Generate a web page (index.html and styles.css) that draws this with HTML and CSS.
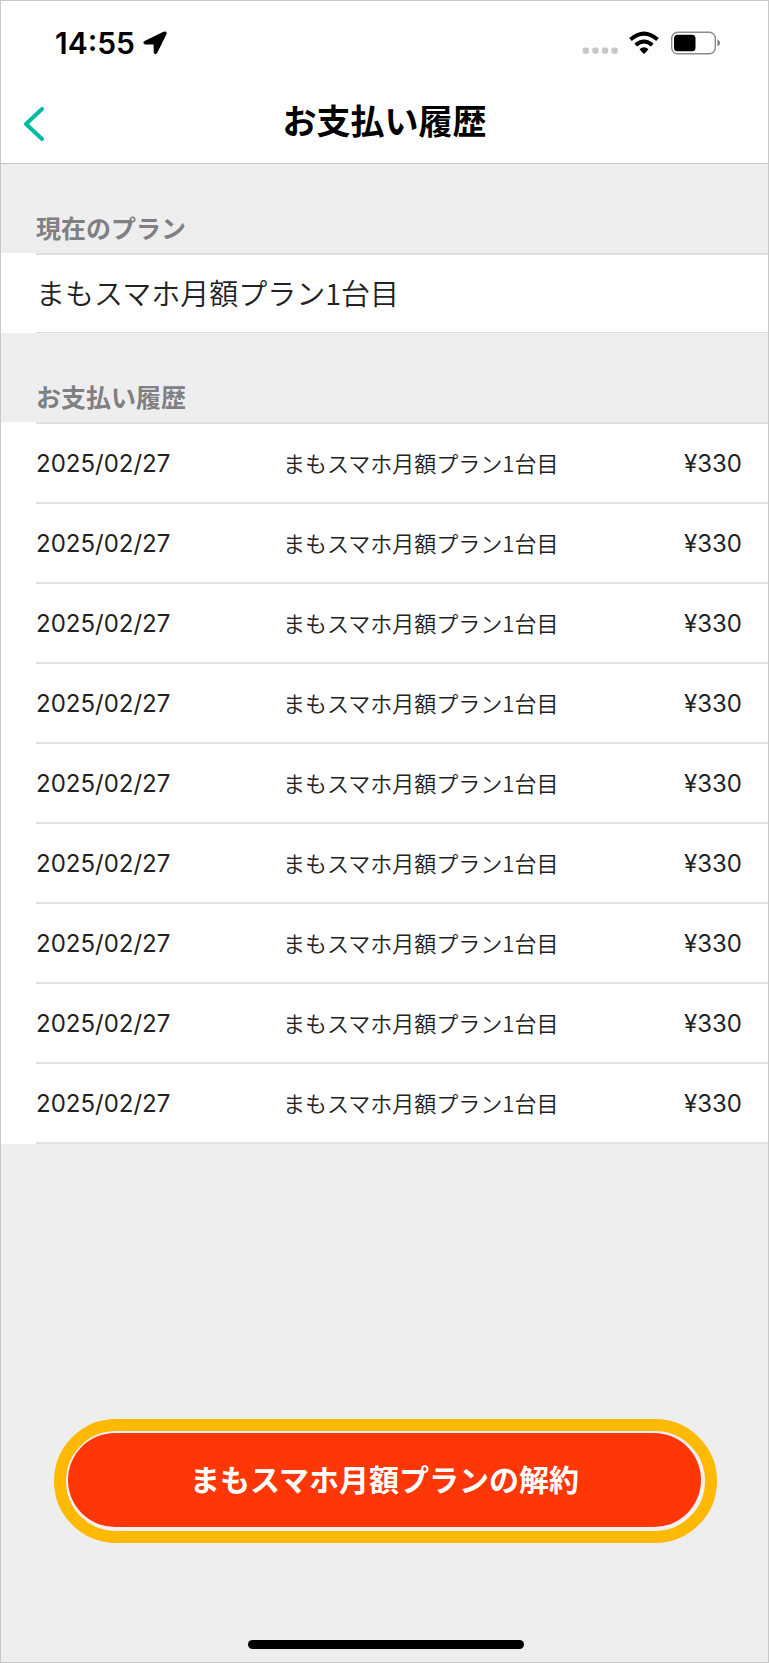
FILE: index.html
```html
<!DOCTYPE html>
<html lang="ja">
<head>
<meta charset="utf-8">
<meta name="viewport" content="width=device-width, initial-scale=1">
<title>お支払い履歴</title>
<link rel="stylesheet" href="styles.css">
</head>
<body>
<div class="screen">
  <header class="header">
    <div class="status">
      <div class="status-left">
        <span class="clock">14:55</span>
        <svg class="location" width="24" height="24" viewBox="0 0 24 24" aria-hidden="true"><path d="M2 9.800 L20.500 .8 Q24.200 -.4 23.600 3 L14.200 22 Q12.400 24.400 10.700 21.800 L10.600 13.600 L2 13.400 Q-1.400 11.900 2 9.800Z"/></svg>
      </div>
      <svg class="indicators" width="140" height="26" viewBox="0 0 140 26" aria-hidden="true">
        <g fill="#c8c8c8"><rect x="0.700" y="17.500" width="6.200" height="6.200" rx="2"/><rect x="10.300" y="17.500" width="6.200" height="6.200" rx="2"/><rect x="19.900" y="17.500" width="6.200" height="6.200" rx="2"/><rect x="29.500" y="17.500" width="6.200" height="6.200" rx="2"/></g>
        <g fill="none" stroke="#000" stroke-width="4"><path d="M48.500 9.600 Q62 -2.400 75.500 9.600"/><path d="M53.700 15.100 Q62 7.900 70.300 15.100"/></g>
        <path d="M57.500 19.300 Q62 15.300 66.500 19.300 L62.700 23.500 Q62 24.200 61.300 23.500Z"/>
        <rect x="89.700" y="2.200" width="43.600" height="21.600" rx="6" fill="none" stroke="#8c8c8c" stroke-width="1.400"/>
        <rect x="92" y="4.800" width="21.500" height="16.500" rx="3.500"/>
        <path d="M135.500 9.500 Q138 10.500 138 13 Q138 15.500 135.500 16.500Z" fill="#777"/>
      </svg>
    </div>
    <nav class="nav">
      <button class="back" type="button" aria-label="戻る"><svg width="22" height="34" viewBox="0 0 22 34" aria-hidden="true"><path d="M19 2 L3 17 L19 32" fill="none" stroke="#00bca2" stroke-width="4" stroke-linecap="round" stroke-linejoin="round"/></svg></button>
      <h1 class="title">お支払い履歴</h1>
    </nav>
  </header>
  <main class="content">
    <section>
      <h2 class="heading">現在のプラン</h2>
      <div class="panel"><p class="plan">まもスマホ月額プラン1台目</p></div>
    </section>
    <section>
      <h2 class="heading">お支払い履歴</h2>
      <div class="panel">
        <table class="history">
          <tbody>
            <tr><td class="date">2025/02/27</td><td class="item">まもスマホ月額プラン1台目</td><td class="price">¥330</td></tr>
            <tr><td class="date">2025/02/27</td><td class="item">まもスマホ月額プラン1台目</td><td class="price">¥330</td></tr>
            <tr><td class="date">2025/02/27</td><td class="item">まもスマホ月額プラン1台目</td><td class="price">¥330</td></tr>
            <tr><td class="date">2025/02/27</td><td class="item">まもスマホ月額プラン1台目</td><td class="price">¥330</td></tr>
            <tr><td class="date">2025/02/27</td><td class="item">まもスマホ月額プラン1台目</td><td class="price">¥330</td></tr>
            <tr><td class="date">2025/02/27</td><td class="item">まもスマホ月額プラン1台目</td><td class="price">¥330</td></tr>
            <tr><td class="date">2025/02/27</td><td class="item">まもスマホ月額プラン1台目</td><td class="price">¥330</td></tr>
            <tr><td class="date">2025/02/27</td><td class="item">まもスマホ月額プラン1台目</td><td class="price">¥330</td></tr>
            <tr><td class="date">2025/02/27</td><td class="item">まもスマホ月額プラン1台目</td><td class="price">¥330</td></tr>
          </tbody>
        </table>
      </div>
    </section>
  </main>
  <footer class="footer">
    <div class="ring"><button class="cancel" type="button">まもスマホ月額プランの解約</button></div>
    <div class="home"></div>
  </footer>
</div>
</body>
</html>
```
FILE: styles.css
```css
* { box-sizing: border-box; }
body {
  margin: 0;
  font-family: "Noto Sans CJK JP", sans-serif;
  color: #222;
}
h1, h2, p { margin: 0; }
svg { display: block; }
.screen {
  display: flex;
  flex-direction: column;
  min-height: 100vh;
  border: 1px solid #c8c8c8;
  background: #eee;
}
.header {
  background: #fff;
  border-bottom: 1px solid #c4c4c4;
}
.status {
  display: flex;
  justify-content: space-between;
  align-items: center;
  height: 84px;
  padding: 0 46px 0 54px;
}
.status-left {
  display: flex;
  align-items: center;
  gap: 8px;
}
.clock {
  font: 600 30px/36px Inter, sans-serif;
  color: #000;
}
.nav {
  display: grid;
  grid-template-columns: 1fr auto 1fr;
  align-items: center;
  height: 78px;
  padding: 0 22px;
}
.back {
  justify-self: start;
  padding: 0;
  border: 0;
  background: none;
}
.title {
  font-size: 34px;
  line-height: 40px;
  font-weight: 700;
  color: #000;
  padding-bottom: 8px;
}
.content { flex: 1; }
.heading {
  padding: 48px 35px 11px;
  font-size: 25px;
  line-height: 30px;
  font-weight: 700;
  color: #808084;
}
.panel {
  padding-left: 35px;
  background: #fff;
}
.plan {
  padding: 17px 0 20px;
  border: solid #dedede;
  border-width: 2px 0 1px;
  font-size: 29px;
  line-height: 40px;
  font-weight: 350;
}
.history {
  width: 100%;
  border-top: 2px solid #e2e2e2;
  border-spacing: 0;
}
.history td {
  height: 80px;
  padding: 0;
  border-bottom: 2px solid #e2e2e2;
  font-size: 22px;
  line-height: 32px;
}
.history .date,
.history .price {
  padding-top: 2px;
  font-family: Inter, sans-serif;
  font-size: 24px;
}
.history .date { width: 247px; }
.history .item {
  padding-bottom: 3px;
  font-weight: 350;
}
.history .price {
  padding-right: 26px;
  text-align: right;
}
.footer {
  display: flex;
  flex-direction: column;
  align-items: center;
  padding: 0 51px 13px 53px;
}
.ring {
  width: 100%;
  padding: 2px 4px 4px 2px;
  border: 12px solid #ffb900;
  border-radius: 62px;
  background: #f2f0f4;
}
.cancel {
  display: block;
  width: 100%;
  padding: 25px 0 29px;
  border: 0;
  border-radius: 47px;
  background: #ff3605;
  color: #fff;
  font: 700 30px/40px "Noto Sans CJK JP", sans-serif;
}
.home {
  width: 276px;
  height: 9px;
  margin-top: 97px;
  border-radius: 5px;
  background: #000;
}
```
